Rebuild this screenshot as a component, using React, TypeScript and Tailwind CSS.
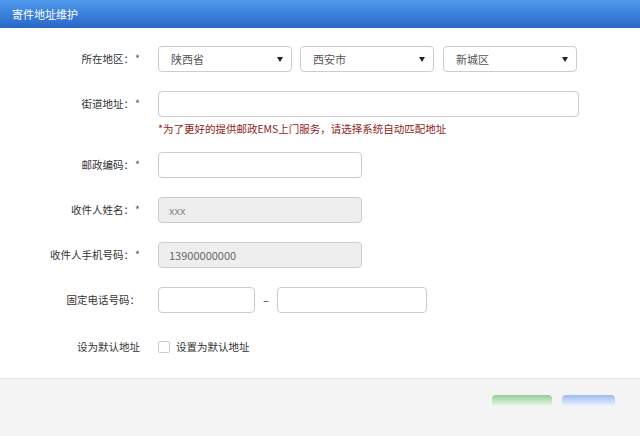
import React from 'react';

const font = { fontFamily: '"Noto Sans CJK SC", "Liberation Sans", sans-serif' };

function Label({ text, required = true }: { text: string; required?: boolean }) {
  return (
    <div className="w-[140px] shrink-0 text-right text-[10.5px] text-[#333]">
      {text}
      {required && <span className="ml-[1px] text-[#555]">*</span>}
    </div>
  );
}

function Select({ value, className }: { value: string; className?: string }) {
  return (
    <div
      className={
        'flex h-[26px] w-[134px] items-center justify-between rounded-[4px] border border-[#ccc] bg-white pl-[12px] pr-[7px] text-[11px] text-[#555] ' +
        (className ?? '')
      }
    >
      <span>{value}</span>
      <svg width="6" height="5" viewBox="0 0 6 5" className="mr-[1px]">
        <path d="M0 0h6L3 5z" fill="#222" />
      </svg>
    </div>
  );
}

export default function App() {
  return (
    <div className="flex h-[436px] w-[640px] flex-col overflow-hidden bg-white" style={font}>
      {/* Header */}
      <div className="flex h-[28px] shrink-0 items-center bg-gradient-to-b from-[#4f9aec] to-[#2867c8] pl-[12px] text-[11px] text-white">
        寄件地址维护
      </div>

      {/* Form */}
      <div className="flex flex-1 flex-col">
        <div className="mt-[18px] flex h-[26px] items-center gap-[18px]">
          <Label text="所在地区：" />
          <div className="flex items-center">
            <Select value="陕西省" />
            <Select value="西安市" className="ml-[8px]" />
            <Select value="新城区" className="ml-[9px]" />
          </div>
        </div>

        <div className="mt-[19px] flex h-[26px] items-center gap-[18px]">
          <Label text="街道地址：" />
          <div className="h-[26px] w-[421px] rounded-[4px] border border-[#ccc] bg-white" />
        </div>
        <div className="mt-[5px] h-[14px] pl-[158px] text-[10.5px] leading-[14px] text-[#8e1b1b]">
          *为了更好的提供邮政EMS上门服务，请选择系统自动匹配地址
        </div>

        <div className="mt-[16px] flex h-[26px] items-center gap-[18px]">
          <Label text="邮政编码：" />
          <div className="h-[26px] w-[204px] rounded-[4px] border border-[#ccc] bg-white" />
        </div>

        <div className="mt-[19px] flex h-[26px] items-center gap-[18px]">
          <Label text="收件人姓名：" />
          <div className="flex h-[26px] w-[204px] items-center rounded-[4px] border border-[#ccc] bg-[#eee] pl-[10px] text-[11px] text-[#888]">
            xxx
          </div>
        </div>

        <div className="mt-[19px] flex h-[26px] items-center gap-[18px]">
          <Label text="收件人手机号码：" />
          <div className="flex h-[26px] w-[204px] items-center rounded-[4px] border border-[#ccc] bg-[#eee] pl-[10px] text-[11px] text-[#666]">
            13900000000
          </div>
        </div>

        <div className="mt-[19px] flex h-[26px] items-center gap-[18px]">
          <Label text="固定电话号码：" required={false} />
          <div className="flex items-center">
            <div className="h-[26px] w-[97px] rounded-[4px] border border-[#ccc] bg-white" />
            <span className="w-[22px] text-center text-[11px] text-[#333]">–</span>
            <div className="h-[26px] w-[150px] rounded-[4px] border border-[#ccc] bg-white" />
          </div>
        </div>

        <div className="mt-[21px] flex h-[26px] items-center gap-[18px]">
          <Label text="设为默认地址" required={false} />
          <div className="flex items-center gap-[6px] text-[10.5px] text-[#333]">
            <span className="h-[12px] w-[12px] rounded-[2px] border border-[#ccc] bg-white" />
            设置为默认地址
          </div>
        </div>
      </div>

      {/* Footer */}
      <div className="flex h-[58px] shrink-0 justify-end gap-[10px] border-t border-[#e6e6e6] bg-[#f4f4f4] pr-[25px] pt-[16px]">
        <div className="h-[12px] w-[60px] rounded-t-[4px] bg-gradient-to-b from-[#94cc94] to-[#f6fbf6]" />
        <div className="h-[12px] w-[53px] rounded-t-[4px] bg-gradient-to-b from-[#9cbcf0] to-[#f4f8fe]" />
      </div>
    </div>
  );
}
